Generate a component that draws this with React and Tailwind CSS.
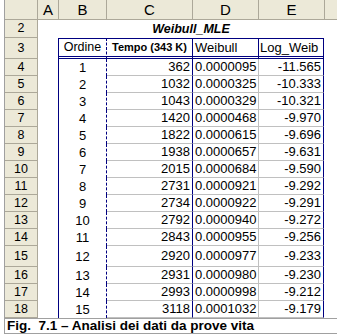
import React from "react";

const data = [
  [4, 1, 362, "0.0000095", "-11.565"],
  [5, 2, 1032, "0.0000325", "-10.333"],
  [6, 3, 1043, "0.0000329", "-10.321"],
  [7, 4, 1420, "0.0000468", "-9.970"],
  [8, 5, 1822, "0.0000615", "-9.696"],
  [9, 6, 1938, "0.0000657", "-9.631"],
  [10, 7, 2015, "0.0000684", "-9.590"],
  [11, 8, 2731, "0.0000921", "-9.292"],
  [12, 9, 2734, "0.0000922", "-9.291"],
  [13, 10, 2792, "0.0000940", "-9.272"],
  [14, 11, 2843, "0.0000955", "-9.256"],
  [15, 12, 2920, "0.0000977", "-9.233"],
  [16, 13, 2931, "0.0000980", "-9.230"],
  [17, 14, 2993, "0.0000998", "-9.212"],
  [18, 15, 3118, "0.0001032", "-9.179"],
];

function RowHead({ n }) {
  return (
    <div className="w-[33px] shrink-0 bg-[#ECE9D8] border-r border-b border-[#ACA899] flex items-center justify-center text-[12.5px]">
      {n}
    </div>
  );
}

export default function App() {
  return (
    <div className="w-[337px] h-[335px] bg-white overflow-hidden font-['Liberation_Sans',Arial,sans-serif] text-black">
      <div className="ml-[4px] h-[334px] border-l border-[#A0A0A0] flex flex-col">
        {/* column headers */}
        <div className="flex h-[20px] shrink-0 bg-[#ECE9D8] border-b border-[#ACA899] text-[15px] leading-none">
          <div className="w-[33px] border-r border-[#ACA899]" />
          <div className="w-[21px] border-r border-[#ACA899] flex items-end justify-center pb-[2px]">A</div>
          <div className="w-[48px] border-r border-[#ACA899] flex items-end justify-center pb-[2px]">B</div>
          <div className="w-[86px] border-r border-[#ACA899] flex items-end justify-center pb-[2px]">C</div>
          <div className="w-[66px] border-r border-[#ACA899] flex items-end justify-center pb-[2px]">D</div>
          <div className="w-[66px] border-r border-[#ACA899] flex items-end justify-center pb-[2px]">E</div>
          <div className="flex-1" />
        </div>

        {/* row 2: title */}
        <div className="flex h-[18px] shrink-0">
          <RowHead n={2} />
          <div className="w-[20px]" />
          <div className="w-[266px] flex items-center justify-center font-bold italic text-[12.5px]">
            Weibull_MLE
          </div>
        </div>

        {/* row 3: table header */}
        <div className="flex h-[21px] shrink-0">
          <RowHead n={3} />
          <div className="w-[20px]" />
          <div className="w-[49px] border-t border-l border-r border-b-[3px] border-[#000080] [border-right-style:dashed] [border-bottom-style:double] flex items-center justify-center text-[12.5px]">
            Ordine
          </div>
          <div className="w-[86px] border-t border-r border-b-[3px] border-[#000080] [border-bottom-style:double] flex items-center justify-center font-bold text-[11px] whitespace-nowrap">
            Tempo (343 K)
          </div>
          <div className="w-[66px] border-t border-r border-b-[3px] border-[#000080] [border-bottom-style:double] flex items-center pl-[2px] text-[13px]">
            Weibull
          </div>
          <div className="w-[65px] border-t border-r border-b-[3px] border-[#000080] [border-bottom-style:double] flex items-center pl-[1px] text-[13px]">
            Log_Weib
          </div>
        </div>

        {/* data rows */}
        {data.map(([r, n, t, w, l]) => (
          <div key={r} className={`flex shrink-0 text-[13px] ${r === 15 ? "h-[21px]" : "h-[17px]"}`}>
            <RowHead n={r} />
            <div className="w-[20px]" />
            <div className="w-[49px] border-l border-r border-[#000080] [border-right-style:dashed] flex items-center justify-center">
              {n}
            </div>
            <div className="w-[86px] border-r border-r-[#000080] border-b border-b-[#C0C0C0] flex items-center justify-end pr-[2px]">
              {t}
            </div>
            <div className="w-[66px] border-r border-b border-[#C0C0C0] flex items-center pl-[2px]">
              {w}
            </div>
            <div className="w-[65px] border-r border-r-[#000080] border-b border-b-[#C0C0C0] flex items-center justify-end pr-[2px]">
              {l}
            </div>
          </div>
        ))}

        {/* caption */}
        <div className="h-[16px] shrink-0 border-y border-[#A0A0A0] flex items-center pl-[2px] font-bold text-[13.5px] whitespace-nowrap">
          Fig.&nbsp; 7.1 – Analisi dei dati da prove vita
        </div>
      </div>
    </div>
  );
}
